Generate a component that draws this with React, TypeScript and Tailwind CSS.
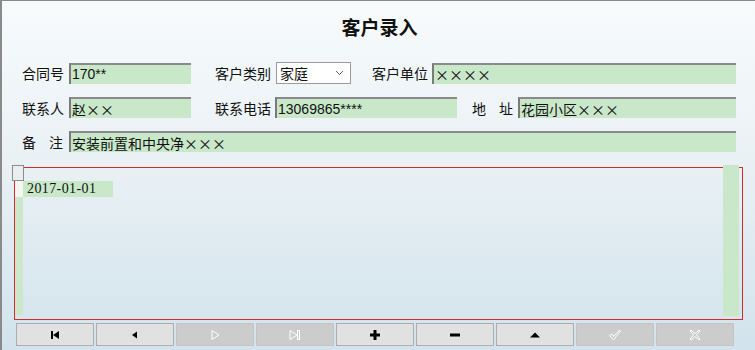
import React from "react";

const cjk = { fontFamily: '"Noto Sans CJK SC", "Liberation Sans", sans-serif' };
const lat = { fontFamily: '"Liberation Sans", "Noto Sans CJK SC", sans-serif' };

function Field({ w, value, latin }: { w: string; value: string; latin?: boolean }) {
  return (
    <div
      className={`${w} h-[21px] bg-[#c9e8c9] border-t-2 border-l-2 border-t-[#8a8a8a] border-l-[#7a7a7a] flex items-center pl-[1px] text-[14px] text-[#111] whitespace-nowrap overflow-hidden leading-none`}
      style={latin ? lat : cjk}
    >
      {value}
    </div>
  );
}

function Label({ w, children }: { w: string; children: React.ReactNode }) {
  return (
    <div className={`${w} text-[14px] text-[#111] leading-none whitespace-nowrap`} style={cjk}>
      {children}
    </div>
  );
}

function Spread({ a, b, w }: { a: string; b: string; w: string }) {
  return (
    <span className={`${w} flex justify-between`}>
      <span>{a}</span>
      <span>{b}</span>
    </span>
  );
}

function Icon({ kind }: { kind: string }) {
  const dis = "#ffffff";
  switch (kind) {
    case "first":
      return (
        <svg width="12" height="10" viewBox="0 0 12 10">
          <rect x="2" y="1" width="2" height="8" fill="#000" />
          <polygon points="4,5 10,1 10,9" fill="#000" />
        </svg>
      );
    case "prev":
      return (
        <svg width="12" height="10" viewBox="0 0 12 10">
          <polygon points="3,5 8,1.5 8,8.5" fill="#000" />
        </svg>
      );
    case "next":
      return (
        <svg width="12" height="12" viewBox="0 0 12 12">
          <polygon points="3,1.5 10,6 3,10.5" fill="none" stroke={dis} strokeWidth="1" />
        </svg>
      );
    case "last":
      return (
        <svg width="14" height="12" viewBox="0 0 14 12">
          <polygon points="2,1.5 9,6 2,10.5" fill="none" stroke={dis} strokeWidth="1" />
          <rect x="9.5" y="1.5" width="2" height="9" fill="none" stroke={dis} strokeWidth="1" />
        </svg>
      );
    case "add":
      return (
        <svg width="12" height="12" viewBox="0 0 12 12">
          <rect x="4.5" y="1" width="3" height="10" fill="#000" />
          <rect x="1" y="4.5" width="10" height="3" fill="#000" />
        </svg>
      );
    case "del":
      return (
        <svg width="12" height="12" viewBox="0 0 12 12">
          <rect x="1" y="4.5" width="10" height="3" fill="#000" />
        </svg>
      );
    case "up":
      return (
        <svg width="12" height="10" viewBox="0 0 12 10">
          <polygon points="1,7.5 6,2.5 11,7.5" fill="#000" />
        </svg>
      );
    case "ok":
      return (
        <svg width="14" height="14" viewBox="0 0 14 14">
          <path d="M1.5 7.5 L4 6 L5.5 8.5 L11.5 2 L12.5 3 L5.5 12 Z" fill="none" stroke={dis} strokeWidth="1" strokeLinejoin="round" />
        </svg>
      );
    case "cancel":
      return (
        <svg width="14" height="14" viewBox="0 0 14 14">
          <path d="M2 3 L3 2 L7 5.5 L11 2 L12 3 L8.5 7 L12 11 L11 12 L7 8.5 L3 12 L2 11 L5.5 7 Z" fill="none" stroke={dis} strokeWidth="1" strokeLinejoin="round" />
        </svg>
      );
  }
  return null;
}

export default function App() {
  const buttons = [
    { k: "first", on: true },
    { k: "prev", on: true },
    { k: "next", on: false },
    { k: "last", on: false },
    { k: "add", on: true },
    { k: "del", on: true },
    { k: "up", on: true },
    { k: "ok", on: false },
    { k: "cancel", on: false },
  ];
  return (
    <div className="w-[755px] h-[350px] border-l-2 border-t border-[#8a8a8a] bg-gradient-to-b from-[#f8fbfc] via-[#e8f0f4] to-[#d2e3ed] overflow-hidden">
      <div className="h-[50px] flex items-center justify-center pl-[2px]">
        <span className="text-[19px] font-bold text-[#111] leading-none" style={cjk}>
          客户录入
        </span>
      </div>
      <div className="pt-[11px] pl-[20px] flex flex-col gap-[13px]">
        <div className="flex items-center">
          <Label w="w-[47px]">合同号</Label>
          <Field w="w-[122px]" value="170**" latin />
          <div className="w-[24px]" />
          <Label w="w-[61px]">客户类别</Label>
          <div className="w-[75px] h-[22px] bg-white border border-[#9a9a9a] flex items-center justify-between pl-[3px] pr-[6px] text-[14px] text-[#111] leading-none" style={cjk}>
            <span>家庭</span>
            <svg width="9" height="6" viewBox="0 0 9 6">
              <path d="M1 1 L4.5 4.5 L8 1" fill="none" stroke="#606060" strokeWidth="1" />
            </svg>
          </div>
          <div className="w-[21px]" />
          <Label w="w-[60px]">客户单位</Label>
          <Field w="w-[304px]" value="××××" />
        </div>
        <div className="flex items-center">
          <Label w="w-[47px]">联系人</Label>
          <Field w="w-[122px]" value="赵××" />
          <div className="w-[24px]" />
          <Label w="w-[60px]">联系电话</Label>
          <Field w="w-[182px]" value="13069865****" latin />
          <div className="w-[15px]" />
          <Label w="w-[46px]">
            <Spread a="地" b="址" w="w-[41px]" />
          </Label>
          <Field w="w-[218px]" value="花园小区×××" />
        </div>
        <div className="flex items-center">
          <Label w="w-[47px]">
            <Spread a="备" b="注" w="w-[41px]" />
          </Label>
          <Field w="w-[667px]" value="安装前置和中央净×××" />
        </div>
      </div>
      <div className="relative ml-[12px] mt-[15px] w-[729px] h-[153px] border border-[#d42a2a] flex">
        <div className="absolute -left-[3px] -top-[3px] w-[12px] h-[16px] border border-[#8c8c8c] bg-[#e9eef1]" />
        <div className="w-[8px] flex flex-col">
          <div className="h-[13px]" />
          <div className="h-[16px] bg-[#f2f7f2]" />
          <div className="flex-1 bg-[#cbe8cb] mb-[4px]" />
        </div>
        <div className="flex-1 pt-[13px]">
          <div className="w-[90px] h-[16px] bg-[#c9e8c9] flex items-center pl-[4px] text-[14px] tracking-[0.4px] text-[#111] leading-none" style={{ fontFamily: '"Liberation Serif", serif' }}>
            2017-01-01
          </div>
        </div>
        <div className="w-[16px] -mt-[3px] mb-[3px] mr-[3px] bg-[#c9e8c9]" />
      </div>
      <div className="ml-[14px] mt-[3px] flex gap-[2px]">
        {buttons.map((b) => (
          <div
            key={b.k}
            className={`w-[78px] h-[23px] border flex items-center justify-center ${
              b.on ? "bg-[#e1e1e1] border-[#adadad]" : "bg-[#cccccc] border-[#c4c4c4]"
            }`}
          >
            <Icon kind={b.k} />
          </div>
        ))}
      </div>
    </div>
  );
}
